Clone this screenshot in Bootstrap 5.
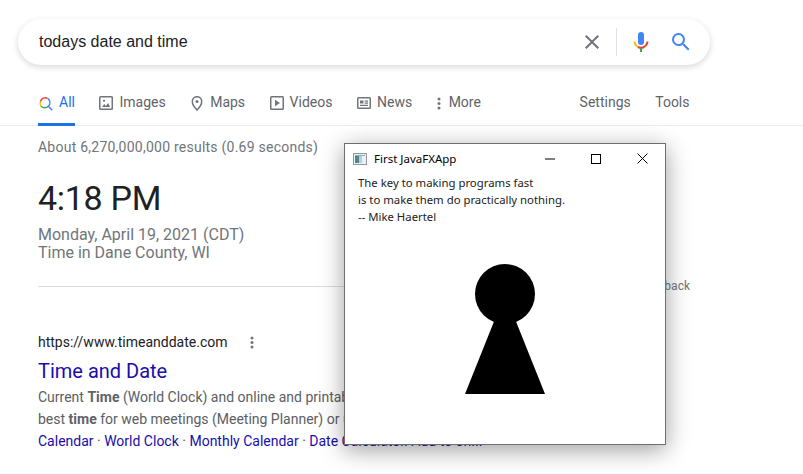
<!DOCTYPE html>
<html lang="en">
<head>
    <meta charset="UTF-8">
    <meta name="viewport" content="width=device-width, initial-scale=1">
    <title>todays date and time</title>
    <link href="https://cdn.jsdelivr.net/npm/bootstrap@5.3.0/dist/css/bootstrap.min.css" rel="stylesheet">
    <style>
        html, body { height: 100%; overflow: hidden; }
        body { font-family: Roboto, "Liberation Sans", sans-serif; font-size: 14px; color: #202124; background: #fff; }
        .search-pill { width: 692px; height: 46px; margin: 19px 0 0 18px; padding: 0 17px 0 21px; border-radius: 23px; box-shadow: 0 2px 5px 1px rgba(64, 60, 67, .16); }
        .search-text { font-family: "Liberation Sans", Arial, sans-serif; font-size: 16px; color: #202124; }
        .pill-divider { width: 1px; height: 28px; background: #dfe1e5; margin: 0 12px; }
        .tab-bar { height: 61px; padding: 20px 113.500px 0 38px; border-bottom: 1px solid #ebebeb; gap: 24.5px; }
        .tab-item { height: 41px; padding-top: 7px; line-height: 20px; color: #5f6368; gap: 6px; text-decoration: none; }
        .tab-item svg { fill: #70757a; }
        .tab-active { color: #1a73e8; border-bottom: 3px solid #1a73e8; }
        .tab-more { gap: 4px; }
        .main-col { padding-left: 38px; position: relative; }
        .stats-line { margin-top: 11px; line-height: 20px; color: #70757a; letter-spacing: .24px; }
        .clock-text { margin-top: 19px; font-size: 34px; line-height: 44px; color: #202124; letter-spacing: -.3px; }
        .date-lines { margin-top: 6px; font-size: 16px; line-height: 18px; color: #70757a; }
        .rule-row { width: 652px; height: 24px; margin-top: 12px; }
        .rule-line { height: 1px; background: #dadce0; margin-top: 1px; }
        .feedback-link { font-size: 12px; color: #70757a; }
        .result-url { margin-top: 34px; line-height: 20px; color: #202124; }
        .url-dots { margin-left: 22px; }
        .result-title { font-size: 20px; line-height: 26px; margin-top: 6px; color: #1a0dab; }
        .result-snippet { line-height: 22px; color: #5a5e63; margin-top: 2px; white-space: nowrap; }
        .result-snippet b { font-weight: 700; color: #5f6368; }
        .result-links { line-height: 22px; color: #1a0dab; white-space: nowrap; }
        .result-links span { color: #4d5156; }
        .fx-window { position: absolute; left: 344px; top: 143px; width: 322px; height: 302px; background: #fff; border: 1px solid #6f6f6f; box-shadow: 0 5px 22px rgba(0, 0, 0, .38); font-family: "Noto Sans", "Open Sans", sans-serif; font-size: 12px; color: #000; }
        .fx-title { height: 29px; padding-left: 8px; gap: 7px; font-size: 11.5px; }
        .fx-btn { width: 46px; height: 29px; }
        .fx-quote { padding: 1px 0 0 13px; line-height: 17px; font-size: 11.35px; color: #222; }
        .fx-figure { margin-top: 39px; }
    </style>
</head>
<body>
<!-- search box -->
<div class="search-pill d-flex align-items-center">
    <div class="search-text flex-grow-1">todays date and time</div>
    <svg width="24" height="24" viewBox="0 0 24 24" fill="#70757a"><path d="M19 6.41L17.59 5 12 10.59 6.41 5 5 6.41 10.59 12 5 17.59 6.41 19 12 13.41 17.59 19 19 17.59 13.41 12z"/></svg>
    <div class="pill-divider"></div>
    <svg width="24" height="24" viewBox="0 0 24 24">
        <rect x="9" y="2" width="6" height="13" rx="3" fill="#4285f4"/>
        <path d="M5.5 11.5a6.5 6.5 0 0 0 4 5.5" fill="none" stroke="#fbbc04" stroke-width="2"/>
        <path d="M9 17a6.5 6.5 0 0 0 6 0" fill="none" stroke="#ea4335" stroke-width="2"/>
        <path d="M14.5 17a6.5 6.5 0 0 0 4-5.5" fill="none" stroke="#ea4335" stroke-width="2"/>
        <rect x="11" y="18" width="2" height="4" fill="#34a853"/>
    </svg>
    <svg class="ms-3" width="24" height="24" viewBox="0 0 24 24" fill="#4285f4"><path d="M15.5 14h-.79l-.28-.27A6.471 6.471 0 0 0 16 9.5 6.5 6.5 0 1 0 9.5 16c1.61 0 3.09-.59 4.23-1.57l.27.28v.79l5 4.99L20.49 19l-4.99-5zm-6 0C7.01 14 5 11.99 5 9.5S7.01 5 9.5 5 14 7.01 14 9.5 11.99 14 9.5 14z"/></svg>
</div>

<!-- tabs -->
<div class="tab-bar d-flex">
    <a class="tab-item tab-active d-flex" href="#">
        <svg class="mt-1" width="15" height="15" viewBox="0 0 15 15" style="fill:none"><path d="M10.3 10.3a5 5 0 0 1-7.3-.2" stroke="#34a853" stroke-width="1.4"/><path d="M3 10.1a5 5 0 0 1-.6-4.6" stroke="#fbbc04" stroke-width="1.4"/><path d="M2.4 5.5A5 5 0 0 1 9.6 2.3" stroke="#ea4335" stroke-width="1.4"/><path d="M9.6 2.3a5 5 0 0 1 .7 8l4 4" stroke="#4285f4" stroke-width="1.4"/></svg>
        All
    </a>
    <a class="tab-item d-flex" href="#">
        <svg class="mt-1" width="14" height="14" viewBox="0 0 14 14"><path d="M1.5 0h11A1.5 1.5 0 0 1 14 1.5v11a1.5 1.5 0 0 1-1.500 1.500h-11A1.500 1.500 0 0 1 0 12.500v-11A1.500 1.500 0 0 1 1.500 0zm0 1.500v11h11v-11z"/><path d="M3 11l2.300-3 1.600 2 2.200-3 2 4z"/><circle cx="5" cy="4.800" r="1.100"/></svg>
        Images
    </a>
    <a class="tab-item d-flex" href="#">
        <svg class="mt-1" width="14" height="15" viewBox="0 0 14 15" style="fill:none"><path d="M7 14s-4.700-4.800-4.700-8.600a4.700 4.700 0 0 1 9.400 0C11.700 9.200 7 14 7 14z" stroke="#70757a" stroke-width="1.500"/><circle cx="7" cy="5.400" r="1.500" fill="#70757a"/></svg>
        Maps
    </a>
    <a class="tab-item d-flex" href="#">
        <svg class="mt-1" width="14" height="14" viewBox="0 0 14 14"><path d="M1.500 0h11A1.500 1.500 0 0 1 14 1.500v11a1.500 1.500 0 0 1-1.500 1.500h-11A1.500 1.500 0 0 1 0 12.500v-11A1.500 1.500 0 0 1 1.500 0zm0 1.500v11h11v-11z"/><path d="M5 3.800L10 7l-5 3.200z"/></svg>
        Videos
    </a>
    <a class="tab-item d-flex" href="#">
        <svg class="mt-1" width="14" height="14" viewBox="0 0 14 14"><path d="M1.500 1h11A1.500 1.500 0 0 1 14 2.500v9a1.500 1.500 0 0 1-1.500 1.500h-11A1.500 1.500 0 0 1 0 11.500v-9A1.500 1.500 0 0 1 1.500 1zm0 1.500v9h11v-9z"/><path d="M3 4.500h3.500v3H3zM7.700 4.500H11v1.200H7.700zM7.700 6.500H11v1.200H7.700zM3 8.800h8V10H3z"/></svg>
        News
    </a>
    <a class="tab-item tab-more d-flex" href="#">
        <svg class="mt-1" width="4" height="14" viewBox="0 0 4 14"><circle cx="2" cy="3" r="1.500"/><circle cx="2" cy="7.500" r="1.500"/><circle cx="2" cy="12" r="1.500"/></svg>
        <span class="ms-1">More</span>
    </a>
    <a class="tab-item d-flex ms-auto" href="#">Settings</a>
    <a class="tab-item d-flex" href="#">Tools</a>
</div>

<!-- results -->
<div class="main-col">
    <div class="stats-line">About 6,270,000,000 results (0.69 seconds)</div>
    <div class="clock-text">4:18 PM</div>
    <div class="date-lines">
        <div>Monday, April 19, 2021 (CDT)</div>
        <div>Time in Dane County, WI</div>
    </div>
    <div class="rule-row d-flex">
        <div class="rule-line flex-grow-1 align-self-center"></div>
        <div class="feedback-link align-self-center">Feedback</div>
    </div>
    <div class="result-url d-flex align-items-center">
        https://www.timeanddate.com
        <svg class="url-dots" width="4" height="14" viewBox="0 0 4 14" fill="#70757a"><circle cx="2" cy="3" r="1.500"/><circle cx="2" cy="7.500" r="1.500"/><circle cx="2" cy="12" r="1.500"/></svg>
    </div>
    <div class="result-title">Time and Date</div>
    <div class="result-snippet">
        Current <b>Time</b> (World Clock) and online and printable calendars, find the<br>
        best <b>time</b> for web meetings (Meeting Planner) or use our calculators.
    </div>
    <div class="result-links">Calendar <span>·</span> World Clock <span>·</span> Monthly Calendar <span>·</span> Date Calculator. Add to on...</div>
</div>

<!-- JavaFX window on top of the browser -->
<div class="fx-window">
    <div class="fx-title d-flex align-items-center">
        <svg width="14" height="14" viewBox="0 0 14 14">
            <rect x=".5" y="1.500" width="13" height="11" fill="#eef1f4" stroke="#8c969e"/>
            <rect x="2" y="4" width="4" height="7" fill="#4f8a8b"/>
            <rect x="6" y="4" width="3" height="7" fill="#b9cfd6"/>
            <rect x="2" y="3" width="10" height="1" fill="#9aa7b0"/>
        </svg>
        <div class="flex-grow-1">First JavaFXApp</div>
        <div class="d-flex">
            <div class="fx-btn d-flex align-items-center justify-content-center"><svg width="10" height="10" viewBox="0 0 10 10"><path d="M0 5h10" stroke="#000"/></svg></div>
            <div class="fx-btn d-flex align-items-center justify-content-center"><svg width="10" height="10" viewBox="0 0 10 10"><rect x=".5" y=".5" width="9" height="9" fill="none" stroke="#000"/></svg></div>
            <div class="fx-btn d-flex align-items-center justify-content-center"><svg width="11" height="11" viewBox="0 0 11 11"><path d="M.5.5l10 10M10.500.5l-10 10" stroke="#000" fill="none"/></svg></div>
        </div>
    </div>
    <div class="fx-quote">
        <div>The key to making programs fast</div>
        <div>is to make them do practically nothing.</div>
        <div>-- Mike Haertel</div>
    </div>
    <svg class="fx-figure d-block mx-auto" width="80" height="130" viewBox="0 0 80 130">
        <circle cx="40" cy="30" r="30"/>
        <path d="M40 30L80 130H0z"/>
    </svg>
</div>

<script src="https://cdn.jsdelivr.net/npm/bootstrap@5.3.0/dist/js/bootstrap.bundle.min.js"></script>
</body>
</html>
